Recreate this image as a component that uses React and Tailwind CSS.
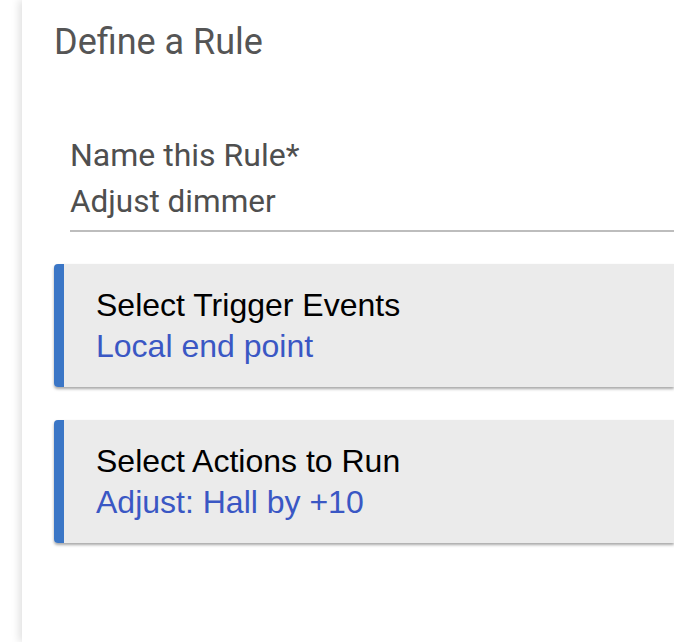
import React from 'react';

const RuleCard = ({ title, value }) => {
  return (
    <div className="flex h-[123px] rounded-l-[4px] bg-[#ebebeb] shadow-[0_2px_3px_rgba(0,0,0,0.35)]">
      <div className="w-[10px] shrink-0 rounded-l-[4px] bg-[#3b76c6]" />
      <div className="pl-[32px] pt-[21px] font-['Liberation_Sans',Arial,sans-serif] text-[32px] leading-[41px]">
        <p className="text-black">{title}</p>
        <p className="text-[#3a57c4]">{value}</p>
      </div>
    </div>
  );
};

export default function App() {
  return (
    <div className="h-[642px] w-[674px] overflow-hidden bg-white">
      <div className="ml-[22px] h-full bg-white shadow-[-3px_0_8px_rgba(0,0,0,0.12)] pl-[32px]">
        <h2 className="pt-[20px] font-['Roboto',sans-serif] text-[36px] leading-[44px] text-[#555555]">
          Define a Rule
        </h2>

        <div className="mt-[67px] pl-[16px]">
          <label className="block font-['Roboto',sans-serif] text-[32px] leading-[48px] text-[#4f4f4f]">
            Name this Rule*
          </label>
          <div className="border-b-2 border-[#bdbdbd] pb-[6px] font-['Roboto',sans-serif] text-[31.5px] leading-[45px] text-[#4f4f4f]">
            Adjust dimmer
          </div>
        </div>

        <div className="mt-[32px] flex flex-col gap-[33px]">
          <RuleCard title="Select Trigger Events" value="Local end point" />
          <RuleCard title="Select Actions to Run" value="Adjust: Hall by +10" />
        </div>
      </div>
    </div>
  );
}
